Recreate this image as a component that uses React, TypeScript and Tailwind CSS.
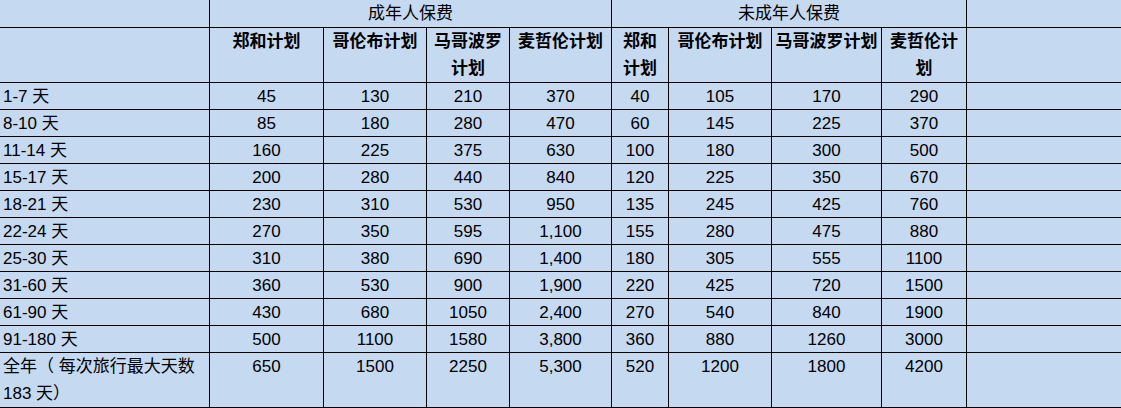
import React from "react";

const cols = "210px 114px 103px 83px 102px 57px 103px 110px 85px 1fr";

const headers = ["郑和计划", "哥伦布计划", "马哥波罗计划", "麦哲伦计划", "郑和计划", "哥伦布计划", "马哥波罗计划", "麦哲伦计划"];

const rows: [string, string[]][] = [
  ["1-7 天", ["45", "130", "210", "370", "40", "105", "170", "290"]],
  ["8-10 天", ["85", "180", "280", "470", "60", "145", "225", "370"]],
  ["11-14 天", ["160", "225", "375", "630", "100", "180", "300", "500"]],
  ["15-17 天", ["200", "280", "440", "840", "120", "225", "350", "670"]],
  ["18-21 天", ["230", "310", "530", "950", "135", "245", "425", "760"]],
  ["22-24 天", ["270", "350", "595", "1,100", "155", "280", "475", "880"]],
  ["25-30 天", ["310", "380", "690", "1,400", "180", "305", "555", "1100"]],
  ["31-60 天", ["360", "530", "900", "1,900", "220", "425", "720", "1500"]],
  ["61-90 天", ["430", "680", "1050", "2,400", "270", "540", "840", "1900"]],
  ["91-180 天", ["500", "1100", "1580", "3,800", "360", "880", "1260", "3000"]],
  ["全年（ 每次旅行最大天数 183 天）", ["650", "1500", "2250", "5,300", "520", "1200", "1800", "4200"]],
];

export default function App() {
  const cell = "border-b border-black leading-[27px] overflow-hidden";
  const br = " border-r";
  return (
    <div
      className="w-[1121px] h-[408px] bg-[#c5d9f1] text-black text-[17px] overflow-hidden"
      style={{ fontFamily: '"Liberation Sans", "Noto Sans CJK SC", sans-serif' }}
    >
      <div
        className="grid"
        style={{
          gridTemplateColumns: cols,
          gridTemplateRows: "28px 55px repeat(10, 27px) 55px",
        }}
      >
        {/* Row 0 */}
        <div className={cell + br}></div>
        <div className={cell + br + " col-span-4 text-center"}>成年人保费</div>
        <div className={cell + br + " col-span-4 text-center"}>未成年人保费</div>
        <div className={cell}></div>
        {/* Row 1 */}
        <div className={cell + br}></div>
        {headers.map((h, i) => (
          <div key={i} className={cell + br + " text-center font-bold px-[3px] break-all"}>
            {h}
          </div>
        ))}
        <div className={cell}></div>
        {/* Data rows */}
        {rows.map(([label, vals], r) => (
          <React.Fragment key={r}>
            <div className={cell + br + " pl-[3px] pr-[2px]"}>{label}</div>
            {vals.map((v, i) => (
              <div key={i} className={cell + br + " text-center"}>
                {v}
              </div>
            ))}
            <div className={cell}></div>
          </React.Fragment>
        ))}
      </div>
    </div>
  );
}
